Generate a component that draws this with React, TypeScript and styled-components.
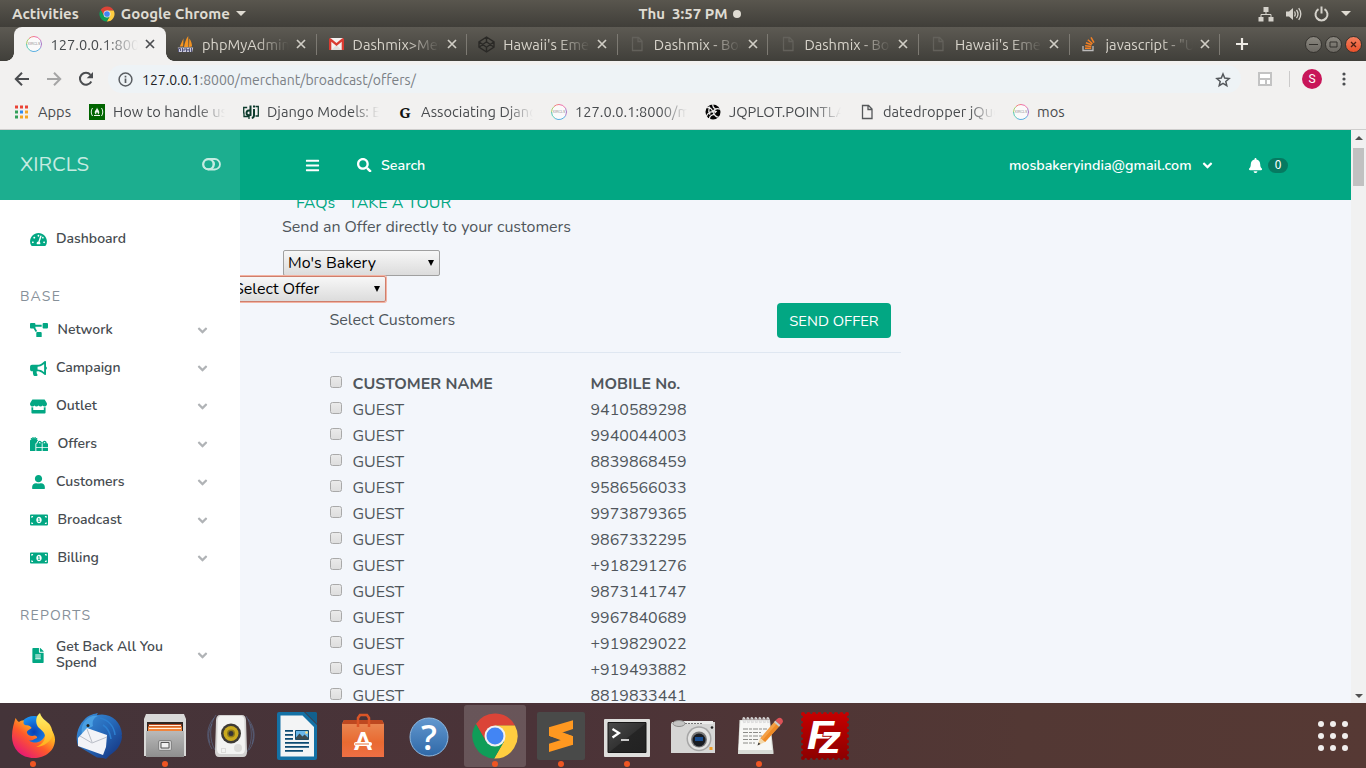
import React from 'react';
import styled, { createGlobalStyle } from 'styled-components';
import {
  FaAngleDown, FaBars, FaBell, FaBullhorn, FaFileAlt, FaGifts, FaMoneyBillAlt,
  FaProjectDiagram, FaSearch, FaStore, FaTachometerAlt, FaUser,
} from 'react-icons/fa';

const uiFont = '"Ubuntu", "Open Sans", "Noto Sans", sans-serif';
const pageFont = '"Nunito", "Lato", "Liberation Sans", sans-serif';
const green = '#02a783';

const GlobalStyle = createGlobalStyle`
  *, *::before, *::after { box-sizing: border-box; }
  body { margin: 0; overflow: hidden; }
  svg { display: block; flex: none; }
`;

const Desktop = styled.div`
  display: flex;
  flex-direction: column;
  width: 1366px;
  height: 768px;
  overflow: hidden;
  font-family: ${uiFont};
`;

/* ---------- system bar ---------- */

const SystemBar = styled.header`
  display: grid;
  grid-template-columns: 1fr auto 1fr;
  align-items: center;
  height: 27px;
  padding: 0 15px 0 12px;
  background: linear-gradient(#59564e, #403e39);
  color: #dfdbd2;
  font-size: 15px;
  font-weight: 700;
  white-space: pre;
`;

const SystemGroup = styled.div<{ $end?: boolean; $gap?: number }>`
  display: flex;
  align-items: center;
  justify-content: ${p => (p.$end ? 'flex-end' : 'flex-start')};
  gap: ${p => p.$gap ?? 0}px;
`;

const AppMenu = styled.div`
  display: flex;
  align-items: center;
  gap: 6px;
  margin-left: 20px;
`;

const Clock = styled.div`
  display: flex;
  align-items: center;
  gap: 5px;
  margin-left: 16px;
`;

const ClockDot = styled.i`
  width: 8px;
  height: 8px;
  border-radius: 50%;
  background: #dfdbd2;
`;

const Triangle = styled.i`
  border: 5px solid transparent;
  border-top-color: #dfdbd2;
  border-bottom: 0;
`;

/* ---------- tab strip ---------- */

const TabStrip = styled.div`
  display: flex;
  height: 34px;
  padding-left: 14px;
  background: linear-gradient(#5d5a53, #403f3a);
`;

const Tab = styled.div<{ $active?: boolean; $divider?: boolean }>`
  position: relative;
  display: flex;
  align-items: center;
  width: ${p => (p.$active ? 152 : 150.6)}px;
  padding-left: ${p => (p.$active ? 11.5 : 11)}px;
  border-radius: 8px 8px 0 0;
  background: ${p => (p.$active ? '#f2f1f0' : 'transparent')};
  color: ${p => (p.$active ? '#45494c' : '#d8d4cb')};
  &::after {
    content: '';
    position: absolute;
    right: 0;
    top: 7px;
    width: 1px;
    height: 21px;
    background: ${p => (p.$divider ? '#7d7a73' : 'transparent')};
  }
`;

const TabFoot = styled.i<{ $right?: boolean }>`
  position: absolute;
  bottom: 0;
  ${p => (p.$right ? 'right' : 'left')}: -8px;
  width: 8px;
  height: 8px;
  background: radial-gradient(circle at ${p => (p.$right ? '100%' : '0')} 0, transparent 7.5px, #f2f1f0 8px);
`;

const TabIcon = styled.span`
  display: flex;
  justify-content: center;
  width: 17px;
  flex: none;
`;

const TabTitle = styled.span`
  width: 87px;
  margin: 1px 7px 0 8px;
  overflow: hidden;
  white-space: nowrap;
  font-size: 14.67px;
  line-height: 22px;
  mask-image: linear-gradient(90deg, #000 62%, transparent 100%);
`;

const WindowButtons = styled.div`
  display: flex;
  align-items: center;
  gap: 3px;
  margin: 0 4px 0 auto;
`;

const WindowButton = styled.span<{ $close?: boolean }>`
  display: flex;
  align-items: center;
  justify-content: center;
  width: 17px;
  height: 17px;
  border: 1px solid #35332f;
  border-radius: 50%;
  background: ${p => (p.$close ? 'linear-gradient(#f4805f, #e9512a)' : 'linear-gradient(#8b8880, #6c6963)')};
`;

/* ---------- toolbar and bookmarks ---------- */

const Toolbar = styled.div`
  display: flex;
  align-items: center;
  height: 36px;
  padding: 0 20px 0 14px;
  background: #f2f1f0;
`;

const NavButtons = styled.div`
  display: flex;
  gap: 16px;
  margin-right: 14px;
`;

const Omnibox = styled.div`
  display: flex;
  align-items: center;
  flex: 1;
  height: 28px;
  padding: 1px 10px 0;
  border-radius: 14px;
  background: #eef3f6;
  font-size: 14px;
  color: #7b8085;
`;

const Url = styled.span`
  flex: 1;
  margin-left: 9px;
  b { color: #202124; font-weight: 400; }
`;

const ToolbarRule = styled.i`
  width: 1px;
  height: 16px;
  margin: 0 12px 0 17px;
  background: #cbcaca;
`;

const Avatar = styled.span`
  width: 20px;
  height: 20px;
  margin-right: 20px;
  border-radius: 50%;
  background: #c81659;
  color: #fff;
  font: 12px/20px Roboto, sans-serif;
  text-align: center;
`;

const Bookmarks = styled.div`
  display: flex;
  align-items: center;
  height: 33px;
  padding: 0 0 2px 14px;
  border-bottom: 1px solid #cfcecd;
  background: #f2f1f0;
`;

const Bookmark = styled.div<{ $width: number; $fade?: boolean }>`
  display: flex;
  align-items: center;
  width: ${p => p.$width}px;
  gap: 8px;
  color: #484b4e;
  > span {
    width: ${p => p.$width - 42}px;
    overflow: hidden;
    white-space: nowrap;
    font-size: 14.67px;
    line-height: 22px;
    mask-image: ${p => (p.$fade ? 'linear-gradient(90deg, #000 76%, transparent 100%)' : 'none')};
  }
`;

/* ---------- web page ---------- */

const Viewport = styled.div`
  display: flex;
  height: 573px;
  overflow: hidden;
  font-family: ${pageFont};
`;

const Sidebar = styled.aside`
  flex: none;
  width: 240px;
  background: #fff;
`;

const Brand = styled.div`
  display: flex;
  align-items: center;
  justify-content: space-between;
  height: 70px;
  padding: 0 19px 2px 20px;
  background: #1cae8f;
  color: #c5ebe1;
  font-size: 20.4px;
`;

const Menu = styled.nav`
  display: flex;
  flex-direction: column;
  padding-top: 20px;
`;

const MenuHeading = styled.div`
  height: 34px;
  margin-top: 19px;
  padding: 0 20px;
  color: #869099;
  font-size: 14px;
  line-height: 39px;
  letter-spacing: 1.2px;
`;

const MenuItem = styled.a<{ $icon: number; $tall?: boolean }>`
  display: flex;
  align-items: center;
  height: ${p => (p.$tall ? 50 : 38)}px;
  padding: 0 30.5px 0 30px;
  color: #464b50;
  font-size: 14px;
  font-weight: 600;
  line-height: 16px;
  > svg:first-child { width: ${p => p.$icon}px; color: ${green}; }
  > span { flex: 1; margin-left: ${p => (p.$icon > 17 ? 9.5 : 26 - p.$icon)}px; }
  > svg:last-child { color: #b0b3b6; }
`;

const Main = styled.div`
  flex: 1;
  display: flex;
  flex-direction: column;
  background: #f3f6fb;
`;

const Header = styled.div`
  display: flex;
  align-items: center;
  flex: none;
  height: 70px;
  padding: 0 63px 0 65px;
  background: ${green};
  color: #fff;
  font-size: 14.25px;
  font-weight: 600;
`;

const SearchLabel = styled.div`
  display: flex;
  align-items: center;
  gap: 9.5px;
  flex: 1;
  margin-left: 37px;
`;

const Account = styled.div`
  display: flex;
  align-items: center;
  gap: 8.5px;
`;

const Alerts = styled.div`
  display: flex;
  align-items: center;
  gap: 5px;
  margin-left: 33px;
`;

const Count = styled.span`
  width: 20px;
  height: 15px;
  border-radius: 7.5px;
  background: #067a61;
  font-size: 11px;
  line-height: 15px;
  text-align: center;
`;

const Content = styled.main`
  flex: 1;
  overflow: hidden;
  padding-left: 42px;
  color: #50565c;
  font-size: 16px;
`;

const Links = styled.div`
  display: flex;
  gap: 13px;
  height: 25px;
  margin-top: -10px;
  padding-left: 14px;
  color: ${green};
  line-height: 26px;
`;

const Intro = styled.p`
  height: 35px;
  margin: 0;
  line-height: 25px;
`;

const Select = styled.div<{ $focused?: boolean }>`
  display: flex;
  align-items: center;
  justify-content: space-between;
  width: 157px;
  height: 26px;
  margin-left: ${p => (p.$focused ? -53 : 1)}px;
  padding: 0 5px 0 4px;
  border: 1px solid ${p => (p.$focused ? '#cf7f6c' : '#a0a0a0')};
  border-radius: 2px;
  box-shadow: ${p => (p.$focused ? '0 0 0 1px #f3b3a3' : 'none')};
  background: linear-gradient(#f7f7f7, #dcdcdc);
  color: #000;
`;

const SelectArrow = styled.i`
  border: 3.5px solid transparent;
  border-top: 6px solid #000;
  border-bottom: 0;
`;

const Customers = styled.section`
  width: 571px;
  margin-left: 47.5px;
`;

const CustomersHead = styled.div`
  display: flex;
  justify-content: space-between;
  height: 51px;
  padding: 1px 9.5px 0 0;
  border-bottom: 1px solid #dfe7f1;
  line-height: 35px;
`;

const SendButton = styled.button`
  width: 114px;
  height: 35px;
  padding: 0;
  border: 0;
  border-radius: 4px;
  background: ${green};
  color: #fff;
  font: 14.8px ${pageFont};
`;

const Table = styled.div`
  padding-top: 18px;
`;

const Line = styled.div<{ $head?: boolean }>`
  display: grid;
  grid-template-columns: 23px 238px auto;
  height: 26px;
  line-height: 26px;
  font-weight: ${p => (p.$head ? 700 : 400)};
`;

const Checkbox = styled.input.attrs({ type: 'checkbox' })`
  appearance: none;
  width: 12px;
  height: 12px;
  margin: 5px 0 0 0.5px;
  border: 1px solid #a9a9a9;
  border-radius: 2.5px;
  background: linear-gradient(#eaeaea, #dedede);
`;

const Scrollbar = styled.div`
  display: flex;
  flex-direction: column;
  align-items: center;
  width: 15px;
  padding: 6px 0 5px;
  background: #f1f1f1;
`;

const ScrollArrow = styled.i<{ $down?: boolean }>`
  margin-top: ${p => (p.$down ? 'auto' : 0)};
  border: 4px solid transparent;
  ${p => (p.$down ? 'border-top-color' : 'border-bottom-color')}: #505050;
  ${p => (p.$down ? 'border-bottom' : 'border-top')}: 0;
`;

const Thumb = styled.i`
  width: 11px;
  height: 38px;
  margin-top: 8px;
  background: #c1c1c1;
`;

/* ---------- dock ---------- */

const Dock = styled.footer`
  display: flex;
  flex: none;
  align-items: center;
  height: 65px;
  padding: 0 16px 0 0;
  background: linear-gradient(90deg, #443439, #4b3338 40%, #533834 75%, #563934);
`;

const DockItem = styled.div<{ $active?: boolean; $running?: boolean }>`
  position: relative;
  display: flex;
  justify-content: center;
  width: 62px;
  height: 62px;
  margin: 0 2px;
  padding-top: 7px;
  border-radius: 3px;
  background: ${p => (p.$active ? 'rgba(255,255,255,.17)' : 'transparent')};
  &::after {
    content: '';
    position: absolute;
    left: 28px;
    bottom: -0.5px;
    width: 6px;
    height: 6px;
    border-radius: 50%;
    background: ${p => (p.$running ? '#ee5523' : 'transparent')};
  }
`;

const AppGrid = styled.div`
  display: grid;
  grid-template-columns: repeat(3, 6px);
  gap: 6px;
  margin: 1px 2px 0 auto;
  i { width: 6px; height: 6px; border-radius: 50%; background: #f0eeed; }
`;

/* ---------- drawings ---------- */

const Chrome = ({ size }: { size: number }) => (
  <svg width={size} height={size} viewBox="0 0 48 48">
    <path fill="#db4437" d="M43.9 13.5A22.5 22.5 0 0 0 4.95 12L14.9 29.25 24 13.5z" />
    <path fill="#ffcd40" d="M43.9 13.5A22.5 22.5 0 0 1 23.15 46.5L33.1 29.25 24 13.5z" />
    <path fill="#0f9d58" d="M4.95 12A22.5 22.5 0 0 0 23.15 46.5L33.1 29.25H14.9z" />
    <circle cx="24" cy="24" r="10.5" fill="#f1f1f1" />
    <circle cx="24" cy="24" r="8.5" fill="#4285f4" />
  </svg>
);

const Ring = () => (
  <svg width="16" height="16" viewBox="0 0 16 16" fill="none" strokeWidth="1">
    <circle cx="8" cy="8" r="7.5" fill="#fbfafa" />
    <path stroke="#ee6fa8" d="M8 .5A7.5 7.5 0 0 1 14.5 4.2" />
    <path stroke="#b07fc8" d="M14.5 4.2A7.5 7.5 0 0 1 14.5 11.8" />
    <path stroke="#58aee0" d="M14.5 11.8A7.5 7.5 0 0 1 4.2 14.5" />
    <path stroke="#55c8b4" d="M4.2 14.5A7.5 7.5 0 0 1 .5 8" />
    <path stroke="#a9cf72" d="M.5 8A7.5 7.5 0 0 1 3 2.5" />
    <path stroke="#f08080" d="M3 2.5A7.5 7.5 0 0 1 8 .5" />
    <text x="8" y="9.4" fontSize="3.6" fontFamily="Liberation Sans" textAnchor="middle" fill="#8d8d8d">XIRCLS</text>
  </svg>
);

const Sail = () => (
  <svg width="17" height="17" viewBox="0 0 17 17">
    <path fill="#f39322" d="M6.5 2.2L2.8 10.5h3.4zM11.2 0C9 3 7.8 6.500 7 11h4.500z M12.300 2.500c1.800 2.200 2.700 5 2.700 8l-3 .5z" />
    <path fill="#c8c8da" d="M.8 11.5h15.400l-1 4.500H1.500z" />
    <path stroke="#55567c" strokeWidth="1" fill="none" d="M1.500 16v-3.500h2V15M5.500 12v4M5.500 14h2.500v-2M9.500 16v-3.500l1.500 2 1.500-2V16M14.500 12v4" />
  </svg>
);

const Gmail = () => (
  <svg width="15" height="12" viewBox="0 0 15 12">
    <path fill="#f3f1f0" d="M1 0h13v12H1z" />
    <path fill="#e0dedd" d="M2.500 12l5-5 5 5z" />
    <path fill="#d93b31" d="M0 1.200V12h2.300V3.800L7.500 8l5.200-4.200V12H15V1.200C15 .3 14 0 13.300.2L7.500 5 1.700.2C1 0 0 .3 0 1.200z" />
  </svg>
);

const CodePen = () => (
  <svg width="17" height="17" viewBox="0 0 17 17" fill="none" stroke="#2a2926" strokeWidth="1.400" strokeLinejoin="round">
    <path d="M8.500 1L16 5.800v5.400L8.500 16 1 11.200V5.800zM8.500 1v4.800M8.500 16v-4.800M1 5.800l7.500 5.400L16 5.800M1 11.200l7.500-5.400 7.500 5.400" />
  </svg>
);

const Page = ({ color }: { color: string }) => (
  <svg width="16" height="16" viewBox="0 0 16 16" fill="none" stroke={color} strokeWidth="1.300">
    <path d="M3.500 1.500h6l3.500 3.500v9.500H3.500zM9 1.500V5.500h4" />
  </svg>
);

const StackOverflow = () => (
  <svg width="14" height="16" viewBox="0 0 14 16" fill="none" strokeWidth="1.300">
    <path stroke="#bcbbbb" d="M1 10v4.500h10V10" />
    <path stroke="#f48024" strokeWidth="1.500" d="M3 12.200h6.200M3.100 9.700l6.200.7M3.900 6.800l5.800 2M5.800 3.800l4.700 4M9 1.300l3 5.400" />
  </svg>
);

const Cross = ({ color }: { color: string }) => (
  <svg width="10" height="10" viewBox="0 0 10 10" stroke={color} strokeWidth="1.700">
    <path d="M1 1l8 8M9 1L1 9" />
  </svg>
);

const AppsIcon = () => {
  const colors = ['#ea4335', '#ea4335', '#ea4335', '#34a05a', '#2f8cf0', '#f5a623', '#34a05a', '#f5a623', '#f5a623'];
  return (
    <svg width="16" height="16" viewBox="0 0 16 16">
      {colors.map((c, i) => <rect key={i} x={1 + (i % 3) * 5} y={1.5 + Math.floor(i / 3) * 5} width="3" height="3" fill={c} />)}
    </svg>
  );
};

const CampIcon = () => (
  <svg width="16" height="16" viewBox="0 0 16 16" fill="none" stroke="#eef4ee" strokeWidth="1">
    <path fill="#006400" stroke="none" d="M0 0h16v16H0z" />
    <path d="M3.500 4C1.800 6.500 1.800 9.500 3.500 12M12.500 4c1.700 2.500 1.700 5.500 0 8M5 11.500h6" />
    <path fill="#eef4ee" stroke="none" d="M8 3.500c.3 2 2.300 2.600 2.300 4.800 0 1.200-.8 2-1.500 2.300.5-1.300-.3-1.900-.8-2.600-.8 1-.9 1.700-.6 2.600-1-.4-1.700-1.200-1.700-2.300C5.700 6.300 8 5.500 8 3.500z" />
  </svg>
);

const DjangoIcon = () => (
  <svg width="16" height="16" viewBox="0 0 16 16" fill="none" stroke="#0c3b2c">
    <path strokeWidth="2" d="M7.500 1.500v9.500c-2.200.6-4 .2-4-2.100 0-2.200 1.800-2.900 4-2.100M11 5v6.500c0 1.500-.6 2.200-2.200 2.500M11 1.500v2" />
    <path strokeWidth="1.300" d="M.700 9.500V3.500h3.500M12.500 2.500h2.800v9.500h-2.800M1 8.500v4h5v2.500" />
  </svg>
);

const BallIcon = () => (
  <svg width="16" height="16" viewBox="0 0 17 17">
    <circle cx="8.500" cy="8.500" r="8" fill="#050505" />
    <path fill="none" stroke="#f2f1f0" strokeWidth="1.300" d="M2 4c3-1 5 .5 6.500 4.500C10 12 12 14 14.500 14M8.500 8.500C10 5 12 4 16 5.500M8.500 8.500C6 8 3 9.500 1.500 13M8.500 0C8 2 8.500 4 11 5M5 16c-.500-2 .500-4 4.500-5M4.500 2.500L4 8.500" />
    <path fill="#f2f1f0" d="M9.500 6.500l3.500 1.300-2.800 2.700zM3.500 10l2.300-.8-.3 2.800z" />
  </svg>
);

const NavArrow = ({ flip }: { flip?: boolean }) => (
  <svg width="16" height="16" viewBox="0 0 16 16" fill="none" stroke={flip ? '#a5a5a5' : '#4b4d50'} strokeWidth="2">
    {flip ? <path d="M1 8h13M8 1.800L14.200 8 8 14.200" /> : <path d="M15 8H2M8 1.800L1.800 8 8 14.200" />}
  </svg>
);

const Reload = () => (
  <svg width="16" height="16" viewBox="0 0 16 16" fill="none" stroke="#4b4d50" strokeWidth="2">
    <path d="M13.300 10.500A6 6 0 1 1 12.500 3.800" />
    <path fill="#4b4d50" stroke="none" d="M15 1v6.300H8.700z" />
  </svg>
);

const InfoIcon = () => (
  <svg width="15" height="15" viewBox="0 0 15 15" fill="none" stroke="#5a5e62" strokeWidth="1.500">
    <circle cx="7.500" cy="7.500" r="6.400" />
    <path strokeWidth="1.700" d="M7.500 6.500V11M7.500 3.700v1.700" />
  </svg>
);

const StarIcon = () => (
  <svg width="16" height="16" viewBox="0 0 16 16" fill="none" stroke="#54585c" strokeWidth="1.500">
    <path d="M8 2l1.700 4.100 4.400.4-3.300 2.900 1 4.300L8 11.400l-3.800 2.300 1-4.300L1.900 6.500l4.400-.4z" />
  </svg>
);

const PanelIcon = () => (
  <svg width="14" height="14" viewBox="0 0 14 14" fill="none" stroke="#c3c3c3" strokeWidth="2">
    <path fill="#fff" d="M1 1h12v12H1zM1 7h12M8 7v6" />
  </svg>
);

const Dots = () => (
  <svg width="4" height="14" viewBox="0 0 4 14" fill="#4b4d50">
    <circle cx="2" cy="2" r="1.600" /><circle cx="2" cy="7" r="1.600" /><circle cx="2" cy="12" r="1.600" />
  </svg>
);

const NetworkIcon = () => (
  <svg width="16" height="16" viewBox="0 0 16 16" fill="#d5d2cb">
    <path d="M5.500 1h5v5h-5zM.500 11h5v4.500h-5zM10.500 11h5v4.500h-5z" />
    <path fill="none" stroke="#d5d2cb" d="M8 6v2.500M3 11V8.500h10V11" />
  </svg>
);

const VolumeIcon = () => (
  <svg width="16" height="14" viewBox="0 0 16 14" fill="none" stroke="#d5d2cb" strokeWidth="1.300">
    <path fill="#d5d2cb" stroke="none" d="M0 4.500h3L7 1v12L3 9.500H0z" />
    <path d="M8.500 4.500q1.500 2.500 0 5M10.500 2.800q3 4.200 0 8.400M12.700 1.200q4.200 5.800 0 11.600" />
  </svg>
);

const PowerIcon = () => (
  <svg width="15" height="16" viewBox="0 0 15 16" fill="none" stroke="#d5d2cb" strokeWidth="2">
    <path d="M4.500 3.200a6 6 0 1 0 6 0M7.500 .500v7" />
  </svg>
);

const ToggleIcon = () => (
  <svg width="19" height="13" viewBox="0 0 19 13" fill="none" stroke="currentColor" strokeWidth="1.800">
    <rect x="1" y="1" width="17" height="10.500" rx="5.250" />
    <circle cx="6.400" cy="6.250" r="5" />
    <path strokeWidth="1.600" d="M9.500 1.500q5.500 4.500 0 9.500" />
  </svg>
);

const Art = styled.svg.attrs({ width: 48, height: 48, viewBox: '0 0 48 48' })``;

const Firefox = () => (
  <Art>
    <defs>
      <linearGradient id="ffFlame" x1="1" y1="0" x2="0.200" y2="1">
        <stop offset="0" stopColor="#fff44f" /><stop offset=".35" stopColor="#ffb320" />
        <stop offset=".6" stopColor="#ff5a2a" /><stop offset="1" stopColor="#e2107e" />
      </linearGradient>
      <linearGradient id="ffTail" x1="0" y1="0" x2="0" y2="1">
        <stop offset="0" stopColor="#fff36b" /><stop offset="1" stopColor="#ffae1a" />
      </linearGradient>
      <radialGradient id="ffGlobe"><stop offset="0" stopColor="#0a3fb5" /><stop offset="1" stopColor="#1a92f2" /></radialGradient>
    </defs>
    <circle cx="25" cy="20" r="16" fill="url(#ffGlobe)" />
    <path fill="url(#ffFlame)" d="M6.500 6c1 1.500 2 3 3.500 4 2-1.500 3.500-1.800 5-1.500-1 2-.5 3.500 1 4.500 3 .5 6 .8 6.500 3-2 2-5 2-4.500 5 1 3 5 3.500 8 2.500 1.500.5 2.500 1.500 2 2.500-3 1-4 3-8 2.500 6 4.500 14 1 16-5 1.500-5-.5-9-1.500-13 6 4 11.500 10 11.500 17C46 39 36 46 25 46 12 46 3 37 3 24 3 17 5 11 6.500 6z" />
    <path fill="url(#ffTail)" d="M31 1c-4 3-4.500 8-3 12 1.500 4 7.500 5.500 8 11 .3 5-4 9-9 11 8-.5 14-5 16.500-11 .5-4-.5-8-2.500-11-2-3.500-8-5-10-12z" />
  </Art>
);

const Thunderbird = () => (
  <Art>
    <defs><linearGradient id="tbBody" x1="0" y1="0" x2="1" y2="1"><stop offset="0" stopColor="#3d95df" /><stop offset=".5" stopColor="#2668b8" /><stop offset="1" stopColor="#132d78" /></linearGradient></defs>
    <path fill="url(#tbBody)" d="M9 8C14 2 20 2 23 1c-1 1-1 1.500-1 2 13-3 24 6 25 19-.5 1-.5 2 0 3-1 9-6 14-12 18l-4 4-3-1-6-.500L3 34C0 26 2 15 9 8z" />
    <path fill="#4a9fe2" d="M10 9c4-5 9-6 13-5-5 2-6 6-5 10-3 2-7 2-11 9-1-6 0-10 3-14z" />
    <path fill="#f2f3f7" d="M3 26l9-10 20 7-1 12-3 8L3 34z" />
    <path fill="none" stroke="#b9bdc7" d="M5 24l12 7 15-6M12 17l5 13" />
    <path fill="none" stroke="#2d7fd0" strokeWidth="1.500" d="M25 6c8 2 14 8 15 17M28 13c5 3 7 8 8 14" />
    <circle cx="13" cy="13.500" r="1.500" fill="#22231f" />
  </Art>
);

const Files = () => (
  <Art>
    <defs><linearGradient id="flFront" x1="0" y1="0" x2="0" y2="1"><stop offset="0" stopColor="#b9b9b9" /><stop offset="1" stopColor="#8e8e8e" /></linearGradient></defs>
    <path fill="#d9d9d8" d="M5 2h38l2 5v37H3V7z" />
    <path fill="#2d2522" d="M6 10h36v10H6z" />
    <path fill="#b7481c" d="M7.500 12h33v8h-33z" /><path fill="#f0843d" d="M7 14.500h34V20H7z" />
    <path stroke="#fff0df" d="M8 13.500h32M8 16.500h32" />
    <path fill="url(#flFront)" d="M5 19h38v26H5z" />
    <rect x="17.500" y="28.500" width="13" height="10" rx="1.500" fill="#d2d2d2" stroke="#858585" />
    <path fill="#f1f1f1" stroke="#555" d="M20 30.500h8v5.500h-8z" />
  </Art>
);

const Speaker = () => (
  <Art>
    <path fill="none" stroke="#617ba4" strokeOpacity=".5" strokeWidth="1" d="M7 6C-1 15-1 28 5 37M9 3C2 12 2 28 8 38M41 7c8 9 8 22 1 31M39 4c7 10 7 26 1 36M5 12C1 18 1 25 3 31M43 12c4 6 4 13 2 20" />
    <path fill="#d3d2d1" d="M13 3h22q3.500 0 4 5l1 32q0 5-4 5H12q-4 0-4-5L9 8q.5-5 4-5z" />
    <path fill="#f3f3f2" d="M14 4h20q3 0 3.300 4L38 37q0 5-4 5H14q-4 0-4-5l.7-29Q11 4 14 4z" />
    <circle cx="24" cy="21.500" r="10" fill="#3d3a35" /><circle cx="24" cy="21.500" r="7.500" fill="#c9a91e" />
    <circle cx="24" cy="21.500" r="4" fill="#8b7819" /><circle cx="24" cy="21.500" r="2.500" fill="#353338" />
    <circle cx="31" cy="36" r="4" fill="#dddcda" /><rect x="14.500" y="36.500" width="4" height="4" fill="none" stroke="#dddcda" />
  </Art>
);

const Writer = () => (
  <Art>
    <path fill="#1471a5" d="M6 0h25l13 13v33a2 2 0 0 1-2 2H6a2 2 0 0 1-2-2V2a2 2 0 0 1 2-2z" />
    <path fill="#12608e" d="M32 0h11l1 1v11z" />
    <path fill="#f3f4f5" d="M7.500 3.500h22L41 15v29.500H7.500z" />
    <path stroke="#0c4a72" strokeWidth="1.900" d="M12 18.900h8M12 22.900h8M12 26.900h8M12 30.900h24M12 34.900h24M12 38.900h18" />
    <path fill="#69b6e8" stroke="#0c4a72" d="M22.500 18.500h13v9h-13z" />
    <path fill="#3c4a4e" d="M23 27.500v-2l3.500-4 3 3 2-2 4 3.500v1.500z" /><circle cx="33.500" cy="20.500" r="1.300" fill="#ffe082" />
  </Art>
);

const Software = () => (
  <Art>
    <defs><linearGradient id="swBag" x1="0" y1="0" x2="0" y2="1"><stop offset="0" stopColor="#e98b57" /><stop offset=".6" stopColor="#e96a31" /><stop offset="1" stopColor="#ee6f45" /></linearGradient></defs>
    <path fill="url(#swBag)" d="M3 12l2-4h38l2 4v33H3z" /><path fill="#bd4820" d="M3 12l2-4h38l2 4z" />
    <path fill="none" stroke="#db5527" strokeWidth="2.500" d="M19 15V6l2-3h7l2 3v9" />
    <text x="24" y="38" textAnchor="middle" fontFamily="Lato" fontWeight="900" fontSize="25" fill="#fff">A</text>
    <rect x="15" y="30" width="18" height="4" rx="2" fill="#fff" /><path stroke="#e9703a" d="M16 32h14" />
  </Art>
);

const Help = () => (
  <Art>
    <defs><linearGradient id="hpBall" x1="0" y1="0" x2="0" y2="1"><stop offset="0" stopColor="#6298cf" /><stop offset="1" stopColor="#2f68a7" /></linearGradient></defs>
    <circle cx="24" cy="25" r="19" fill="url(#hpBall)" stroke="#8fb9e0" />
    <text x="24" y="37.500" textAnchor="middle" fontFamily="Open Sans" fontSize="35" fontWeight="600" fill="#fff">?</text>
  </Art>
);

const Sublime = () => (
  <Art>
    <rect width="48" height="48" rx="2" fill="#494a49" />
    <path fill="#ff9820" d="M12 15.300L36 8.300V17L24.700 20.700 36 24.300v8.400L12 40v-8.300l12.700-4L12 23.700z" />
    <path fill="#e88415" d="M12 23.700l3-1L36 26v4z" />
    <path fill="#ff9820" d="M12 15.300v8.400L36 32.700v-8.400z" />
  </Art>
);

const Terminal = () => (
  <Art>
    <defs><linearGradient id="tmGlass" x1="0" y1="0" x2="1" y2="1"><stop offset="0" stopColor="#4a4a4a" /><stop offset=".5" stopColor="#333" /><stop offset=".52" stopColor="#252525" /><stop offset="1" stopColor="#222" /></linearGradient></defs>
    <rect x="1" y="7" width="46" height="38" rx="1" fill="#dededc" />
    <path fill="url(#tmGlass)" stroke="#171717" d="M5 10.500h38v30H5z" />
    <path fill="none" stroke="#fff" strokeWidth="2.200" d="M9.500 17l6.500 4-6.500 4.500" /><path stroke="#fff" strokeWidth="1.500" d="M18 28h8" />
  </Art>
);

const Camera = () => (
  <Art>
    <path fill="#d6d6d5" d="M3 10h43v31H2V12z" /><path fill="#ebebea" d="M6 9h38v3H4z" />
    <ellipse cx="10" cy="11.500" rx="6" ry="3" fill="#c4c4c3" stroke="#8c8c8b" />
    <path stroke="#777" strokeDasharray="2 1" d="M16 11.500h18" />
    <circle cx="30" cy="26.700" r="12.500" fill="#a6a6a6" /><circle cx="30" cy="26.700" r="11" fill="#e3e3e2" />
    <circle cx="30" cy="27.500" r="8" fill="#777" /><circle cx="30" cy="28" r="6.500" fill="#191c22" />
    <path fill="#184d91" d="M26 25h8v4h-8z" /><path fill="#ef9c23" d="M40.500 35h3v3h-3z" /><circle cx="43" cy="15.500" r="1.300" fill="#222" />
  </Art>
);

const Notes = () => (
  <Art>
    <path fill="#d8dbd6" d="M3 40l1.500-32H35l3.500 32v2H3z" /><path fill="#f7f7f5" d="M5.500 8.500h29L37 38H3.500z" />
    <path stroke="#8b8b88" strokeWidth="1.200" strokeDasharray="5 1 3 1" d="M8 17h24M8 20.500h18M8 24h20M8 27.500h15M8 31h12" />
    <path fill="none" stroke="#ddd" strokeWidth="1.300" d="M9 11c-3-7 2-7 1 0M13 11c-3-7 2-7 1 0M17 11c-3-7 2-7 1 0M21 11c-3-7 2-7 1 0M25 11c-3-7 2-7 1 0M29 11c-3-7 2-7 1 0M33 11c-3-7 2-7 1 0" />
    <path fill="#f4a046" d="M40 9l5 4.500L30 30l-5-3.500z" /><path fill="#ee8a26" d="M42.500 11l2.500 2.500L30 30l-2.500-2z" />
    <path fill="#f3d9ad" d="M25 26l5 4-7.500 3.500z" /><path fill="#333" d="M23.500 30.500l2 1.500-3 1.500z" />
    <path fill="#c9c9c9" d="M40.500 8.500l5 4.500-1.500 1.700-5-4.500z" /><path fill="#dc5257" d="M42 7q3-2.500 5 0t-.500 5l-1 1-5-4.500z" />
  </Art>
);

const FileZilla = () => (
  <Art>
    <defs><linearGradient id="fzRed" x1="0" y1="0" x2="0" y2="1"><stop offset="0" stopColor="#c40000" /><stop offset="1" stopColor="#8e0000" /></linearGradient></defs>
    <rect x="2" y="2" width="44" height="44" fill="url(#fzRed)" />
    <path fill="none" stroke="url(#fzRed)" strokeWidth="4" strokeDasharray="0 5.500" strokeLinecap="round" d="M2 2h44v44H2z" />
    <text x="6" y="37" textLength="27" lengthAdjust="spacingAndGlyphs" fontFamily="Liberation Sans" fontStyle="italic" fontWeight="700" fontSize="41" fill="#fff">F</text>
    <text x="18" y="41" textLength="22" lengthAdjust="spacingAndGlyphs" fontFamily="Liberation Sans" fontStyle="italic" fontWeight="700" fontSize="38" fill="#fff" stroke="#a90000" strokeWidth="1.600" paintOrder="stroke">z</text>
  </Art>
);

/* ---------- data ---------- */

const tabs: [string, React.ReactNode][] = [
  ['phpMyAdmin', <Sail />], ['Dashmix>Men', <Gmail />], ["Hawaii's Emer", <CodePen />],
  ['Dashmix - Boot', <Page color="#63615b" />], ['Dashmix - Boot', <Page color="#63615b" />],
  ["Hawaii's Emer", <Page color="#63615b" />], ['javascript - "Un', <StackOverflow />],
];

const GIcon = styled.b`
  width: 16px;
  text-align: center;
  color: #111;
  font: 700 15px "Noto Serif", "DejaVu Serif", "Liberation Serif", serif;
`;

const bookmarks: [string, React.ReactNode][] = [
  ['How to handle us', <CampIcon />], ['Django Models: E', <DjangoIcon />], ['Associating Djang', <GIcon>G</GIcon>],
  ['127.0.0.1:8000/me', <Ring />], ['JQPLOT.POINTLA', <BallIcon />], ['datedropper jQue', <Page color="#55585a" />],
];

const menu: [string, React.ReactNode, number][] = [
  ['Network', <FaProjectDiagram size={14.5} />, 18], ['Campaign', <FaBullhorn size={15} />, 17],
  ['Outlet', <FaStore size={15} />, 17], ['Offers', <FaGifts size={14.5} />, 18],
  ['Customers', <FaUser size={14.5} />, 17], ['Broadcast', <FaMoneyBillAlt size={16} />, 18],
  ['Billing', <FaMoneyBillAlt size={16} />, 18],
];

const mobiles = [
  '9410589298', '9940044003', '8839868459', '9586566033', '9973879365', '9867332295', '+918291276',
  '9873141747', '9967840689', '+919829022', '+919493882', '8819833441',
];

const dock: [React.ReactNode, boolean, boolean?][] = [
  [<Firefox />, true], [<Thunderbird />, false], [<Files />, true], [<Speaker />, false], [<Writer />, false],
  [<Software />, false], [<Help />, false], [<Chrome size={48} />, true, true], [<Sublime />, true],
  [<Terminal />, true], [<Camera />, false], [<Notes />, true], [<FileZilla />, false],
];

export default function App() {
  return (
    <Desktop>
      <GlobalStyle />
      <SystemBar>
        <SystemGroup>
          <span>Activities</span>
          <AppMenu><Chrome size={16} /><span>Google Chrome</span><Triangle /></AppMenu>
        </SystemGroup>
        <Clock><span>Thu  3:57 PM</span><ClockDot /></Clock>
        <SystemGroup $end $gap={12}>
          <NetworkIcon /><VolumeIcon /><PowerIcon /><Triangle />
        </SystemGroup>
      </SystemBar>

      <TabStrip>
        <Tab $active>
          <TabFoot /><TabFoot $right />
          <TabIcon><Ring /></TabIcon>
          <TabTitle>127.0.0.1:8000/m</TabTitle>
          <Cross color="#4b4d50" />
        </Tab>
        {tabs.map(([title, icon], i) => (
          <Tab key={i} $divider>
            <TabIcon>{icon}</TabIcon>
            <TabTitle>{title}</TabTitle>
            <Cross color="#d0cdc5" />
          </Tab>
        ))}
        <svg width="44" height="34" viewBox="0 0 44 34" stroke="#efece6" strokeWidth="2.200"><path d="M16 17h12M22 11v12" /></svg>
        <WindowButtons>
          <WindowButton><svg width="9" height="9" viewBox="0 0 9 9" stroke="#33312d"><path d="M0 4.500h9" /></svg></WindowButton>
          <WindowButton><svg width="9" height="9" viewBox="0 0 9 9" stroke="#33312d" fill="none"><path d="M1 2h7v5H1z" /></svg></WindowButton>
          <WindowButton $close><svg width="9" height="9" viewBox="0 0 9 9" stroke="#4a2014" strokeWidth="1.300"><path d="M2 2l5 5M7 2L2 7" /></svg></WindowButton>
        </WindowButtons>
      </TabStrip>

      <Toolbar>
        <NavButtons><NavArrow /><NavArrow flip /><Reload /></NavButtons>
        <Omnibox>
          <InfoIcon />
          <Url><b>127.0.0.1</b>:8000/merchant/broadcast/offers/</Url>
          <StarIcon />
        </Omnibox>
        <SystemGroup>
          <svg width="17" height="14" />
          <PanelIcon /><ToolbarRule /><Avatar>S</Avatar><Dots />
        </SystemGroup>
      </Toolbar>
      <Bookmarks>
        <Bookmark $width={75}><AppsIcon /><span style={{ width: 40 }}>Apps</span></Bookmark>
        {bookmarks.map(([title, icon]) => (
          <Bookmark key={title} $width={154} $fade>{icon}<span>{title}</span></Bookmark>
        ))}
        <Bookmark $width={90}><Ring /><span>mos</span></Bookmark>
      </Bookmarks>

      <Viewport>
        <Sidebar>
          <Brand><span>XIRCLS</span><ToggleIcon /></Brand>
          <Menu>
            <MenuItem $icon={17}><FaTachometerAlt size={15} /><span>Dashboard</span></MenuItem>
            <MenuHeading>BASE</MenuHeading>
            {menu.map(([label, icon, width]) => (
              <MenuItem key={label} $icon={width}>{icon}<span>{label}</span><FaAngleDown size={15} /></MenuItem>
            ))}
            <MenuHeading>REPORTS</MenuHeading>
            <MenuItem $icon={16} $tall><FaFileAlt size={15} /><span>Get Back All You Spend</span><FaAngleDown size={15} /></MenuItem>
          </Menu>
        </Sidebar>
        <Main>
          <Header>
            <FaBars size={15} />
            <SearchLabel><FaSearch size={14.5} /><span>Search</span></SearchLabel>
            <Account><span>mosbakeryindia@gmail.com</span><FaAngleDown size={15} /></Account>
            <Alerts><FaBell size={15} /><Count>0</Count></Alerts>
          </Header>
          <Content>
            <Links><span>FAQs</span><span>TAKE A TOUR</span></Links>
            <Intro>Send an Offer directly to your customers</Intro>
            <Select><span>Mo's Bakery</span><SelectArrow /></Select>
            <Select $focused><span>Select Offer</span><SelectArrow /></Select>
            <Customers>
              <CustomersHead><span>Select Customers</span><SendButton>SEND OFFER</SendButton></CustomersHead>
              <Table>
                <Line $head><Checkbox /><span>CUSTOMER NAME</span><span>MOBILE No.</span></Line>
                {mobiles.map(number => (
                  <Line key={number}><Checkbox /><span>GUEST</span><span>{number}</span></Line>
                ))}
              </Table>
            </Customers>
          </Content>
        </Main>
        <Scrollbar><ScrollArrow /><Thumb /><ScrollArrow $down /></Scrollbar>
      </Viewport>

      <Dock>
        {dock.map(([icon, running, active], i) => (
          <DockItem key={i} $running={running} $active={active}>{icon}</DockItem>
        ))}
        <AppGrid>{Array.from({ length: 9 }, (_, i) => <i key={i} />)}</AppGrid>
      </Dock>
    </Desktop>
  );
}
